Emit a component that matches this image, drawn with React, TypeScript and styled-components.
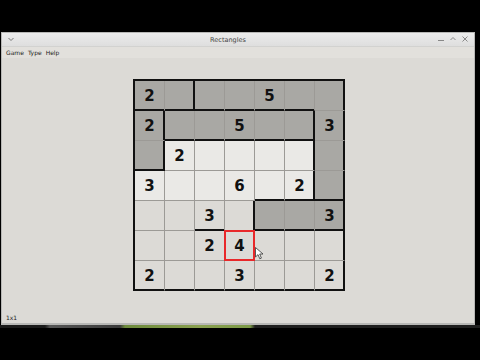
import React from "react";
import styled, { createGlobalStyle } from "styled-components";

const GlobalStyle = createGlobalStyle`
    html, body {
        margin: 0;
        padding: 0;
        background: #000000;
    }
    body {
        font-family: "DejaVu Sans", "Liberation Sans", sans-serif;
    }
`;

const Screen = styled.div`
    width: 480px;
    height: 360px;
    display: flex;
    flex-direction: column;
    background: #000000;
    overflow: hidden;
`;
const Letterbox = styled.div<{ $h: number }>`
    height: ${p => p.$h}px;
    flex: none;
`;
const Window = styled.div`
    display: flex;
    flex-direction: column;
    width: 474px;
    height: 293px;
    margin-left: 1px;
    border: 1px solid #b8b8b6;
    border-bottom-width: 2px;
    background: #dcdad6;
    box-sizing: border-box;
`;
const TitleBar = styled.div`
    position: relative;
    height: 14px;
    flex: none;
    display: flex;
    align-items: center;
    justify-content: center;
    padding-right: 20px;
    background: linear-gradient(#ececec, #dedede);
    border-bottom: 1px solid #d2d2d0;
    box-sizing: border-box;
`;
const TitleText = styled.span`
    font-family: "DejaVu Sans", sans-serif;
    font-size: 6.5px;
    color: #444444;
`;
const TitleMenuIcon = styled.svg`
    position: absolute;
    left: 6px;
    top: 4px;
`;
const Controls = styled.div`
    position: absolute;
    right: 6px;
    top: 3px;
    display: flex;
    gap: 6px;
    align-items: center;
`;
const MenuBar = styled.div`
    height: 11px;
    flex: none;
    display: flex;
    align-items: center;
    gap: 4px;
    padding-left: 4px;
    background: #e2e0dc;
`;
const MenuItem = styled.span`
    font-family: "DejaVu Sans", sans-serif;
    font-size: 6px;
    color: #222222;
`;
const Content = styled.div`
    flex: 1;
    display: flex;
    align-items: center;
    justify-content: center;
    padding-left: 2px;
`;
const Board = styled.div`
    position: relative;
    display: grid;
    grid-template-columns: repeat(7, 30px);
    grid-template-rows: repeat(7, 30px);
    border-left: 2px solid #111;
    border-top: 2px solid #111;
`;
const Cell = styled.div<{ $fill: string; $r: boolean; $b: boolean; $cursor: boolean }>`
    position: relative;
    box-sizing: border-box;
    display: flex;
    align-items: center;
    justify-content: center;
    background: ${p => p.$fill};
    border-right: 1px solid ${p => (p.$r ? "#111" : "#9c9a96")};
    border-bottom: 1px solid ${p => (p.$b ? "#111" : "#9c9a96")};
    box-shadow: ${p => {
        const s: string[] = [];
        if (p.$r) s.push("inset -1px 0 0 #111");
        if (p.$b) s.push("inset 0 -1px 0 #111");
        return s.length ? s.join(", ") : "none";
    }};
    font-family: "DejaVu Sans", sans-serif;
    font-weight: bold;
    font-size: 15px;
    color: #111;
    &::after {
        content: "";
        display: ${p => (p.$cursor ? "block" : "none")};
        position: absolute;
        left: -1px;
        top: -1px;
        right: -1px;
        bottom: -1px;
        border: 2px solid #e8282a;
    }
`;
const Pointer = styled.svg`
    position: absolute;
    left: 120px;
    top: 166px;
`;
const StatusBar = styled.div`
    height: 11px;
    flex: none;
    display: flex;
    align-items: center;
    padding-left: 4px;
    background: #dcdad6;
`;
const StatusText = styled.span`
    font-family: "DejaVu Sans", sans-serif;
    font-size: 6px;
    color: #222222;
`;
const Taskbar = styled.div`
    height: 3px;
    flex: none;
    background: linear-gradient(90deg, #1a1a1a 0px, #1a1a1a 45px, #555 50px, #3a3a3a 120px, #6d8a3c 125px, #8aa050 200px, #7c9a48 250px, #1e1e1e 255px, #1e1e1e 100%);
`;

const GRAY = "#a9a8a4";
const LIGHT = "#eae9e6";
const BASE = "#dcdad6";

const grayCells = ["0,0","0,1","0,2","0,3","0,4","0,5","0,6","1,0","1,1","1,2","1,3","1,4","1,5","1,6","2,0","2,6","3,6","4,4","4,5","4,6"];
const lightCells = ["2,1","2,2","2,3","2,4","2,5","3,0","3,1","3,2","3,3","3,4","3,5"];

const clues: Record<string, string> = {
    "0,0": "2", "0,4": "5", "1,0": "2", "1,3": "5", "1,6": "3", "2,1": "2",
    "3,0": "3", "3,3": "6", "3,5": "2", "4,2": "3", "4,6": "3", "5,2": "2",
    "5,3": "4", "6,0": "2", "6,3": "3", "6,6": "2",
};

// thick edge to the right of a cell / below a cell
const rightEdges = ["0,1","1,0","2,0","1,5","2,5","3,5","4,3"];
const bottomEdges = ["0,0","0,1","0,2","0,3","0,4","0,5","1,1","1,2","1,3","1,4","1,5","2,0","3,4","3,5","3,6","4,4","4,5","4,6","4,2"];

const App = () => {
    const cells = [];
    for (let r = 0; r < 7; r++) {
        for (let c = 0; c < 7; c++) {
            const k = `${r},${c}`;
            const fill = grayCells.includes(k) ? GRAY : lightCells.includes(k) ? LIGHT : BASE;
            cells.push(
                <Cell
                    key={k}
                    $fill={fill}
                    $r={c === 6 || rightEdges.includes(k)}
                    $b={r === 6 || bottomEdges.includes(k)}
                    $cursor={k === "5,3"}
                >
                    {clues[k]}
                </Cell>
            );
        }
    }

    return (
        <Screen>
            <GlobalStyle />
            <Letterbox $h={32} />
            <Window>
                <TitleBar>
                    <TitleMenuIcon width="6" height="5" viewBox="0 0 6 5">
                        <path d="M0.5 1 L3 3.5 L5.5 1" stroke="#777" strokeWidth="1" fill="none" />
                    </TitleMenuIcon>
                    <TitleText>Rectangles</TitleText>
                    <Controls>
                        <svg width="6" height="6" viewBox="0 0 6 6">
                            <path d="M0 4.5 H6" stroke="#888" strokeWidth="1" />
                        </svg>
                        <svg width="6" height="6" viewBox="0 0 6 6">
                            <path d="M0.5 4 L3 1.5 L5.5 4" stroke="#888" strokeWidth="1" fill="none" />
                        </svg>
                        <svg width="6" height="6" viewBox="0 0 6 6">
                            <path d="M0.5 0.5 L5.5 5.5 M5.5 0.5 L0.5 5.5" stroke="#888" strokeWidth="1" />
                        </svg>
                    </Controls>
                </TitleBar>
                <MenuBar>
                    <MenuItem>Game</MenuItem>
                    <MenuItem>Type</MenuItem>
                    <MenuItem>Help</MenuItem>
                </MenuBar>
                <Content>
                    <Board>
                        {cells}
                        <Pointer width="9" height="13" viewBox="0 0 9 13">
                            <path d="M0.5 0.5 L0.5 10 L3 7.6 L4.8 11.8 L6.4 11.1 L4.7 7 L8 7 Z" fill="#fff" stroke="#333" strokeWidth="0.8" />
                        </Pointer>
                    </Board>
                </Content>
                <StatusBar>
                    <StatusText>1x1</StatusText>
                </StatusBar>
            </Window>
            <Taskbar />
        </Screen>
    );
};

export default App;
